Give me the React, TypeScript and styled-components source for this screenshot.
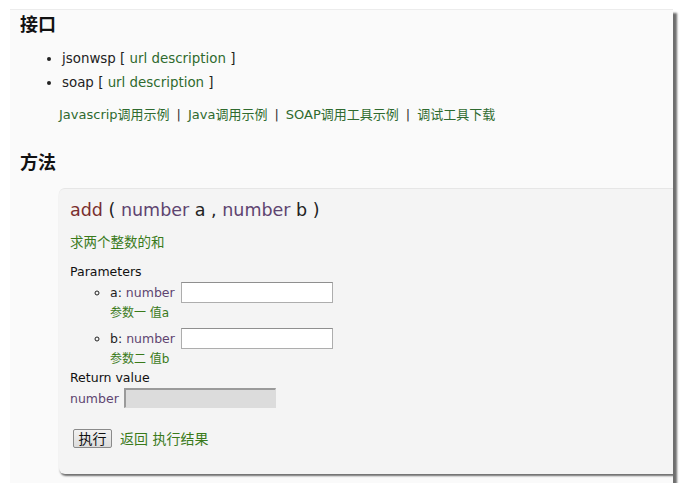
import React from "react";
import styled, { createGlobalStyle } from "styled-components";

const Global = createGlobalStyle`
  html, body { margin: 0; padding: 0; background: #ffffff; }
  body { font-family: "DejaVu Sans", Verdana, "Noto Sans CJK SC", sans-serif; color: #222; }
`;

const Frame = styled.div`
  margin: 9px 0 0 10px;
  width: 663px;
  height: 474px;
  box-sizing: border-box;
  padding-left: 10px;
  overflow: hidden;
  background: #fafafa;
  border-top: 1px solid #ececec;
  box-shadow: 4px 4px 2px #6e6e6e;
`;

const Heading = styled.h2<{ $top: number }>`
  margin: ${(p) => p.$top}px 0 0 0;
  font-family: "Liberation Serif", "Noto Sans CJK SC", serif;
  font-size: 18px;
  font-weight: bold;
  line-height: 24px;
  color: #111;
`;

const EndpointList = styled.ul`
  margin: 10px 0 0 0;
  padding-left: 42px;
  list-style: disc;
  font-size: 13.4px;
`;

const EndpointItem = styled.li`
  line-height: 24px;
`;

const Link = styled.a`
  color: #2f6a2f;
  text-decoration: none;
`;

const ExampleLinks = styled.div`
  margin: 10px 0 0 39px;
  font-size: 13px;
  line-height: 20px;
  color: #333;
`;

const Sep = styled.span`
  margin: 0 7px;
`;

const MethodBox = styled.div`
  margin: 13px 0 0 39px;
  width: 700px;
  box-sizing: border-box;
  padding: 9px 0 26px 11px;
  background: #f4f4f4;
  border-top: 1px solid #e6e6e6;
  border-radius: 6px;
  box-shadow: 1px 2px 2px #6e6e6e;
`;

const Signature = styled.div`
  font-size: 17.5px;
  line-height: 24px;
  color: #222;
`;

const FnName = styled.span`
  color: #7a2e2e;
`;

const TypeName = styled.span`
  color: #5e4470;
`;

const Desc = styled.div<{ $top: number }>`
  margin-top: ${(p) => p.$top}px;
  font-size: 13.5px;
  line-height: 18px;
  color: #3a7a1a;
`;

const Label = styled.div<{ $top: number }>`
  margin-top: ${(p) => p.$top}px;
  font-size: 12.5px;
  line-height: 18px;
  color: #111;
`;

const ParamList = styled.ul`
  margin: 0;
  padding-left: 40px;
  list-style: circle;
  font-size: 12.5px;
`;

const ParamItem = styled.li<{ $top: number }>`
  margin-top: ${(p) => p.$top}px;
`;

const ParamRow = styled.div`
  display: flex;
  align-items: center;
  gap: 6px;
  height: 22px;
`;

const TextInput = styled.input`
  width: 152px;
  height: 21px;
  box-sizing: border-box;
  border: 1px solid #adadad;
  border-top-color: #8f8f8f;
  background: #fff;
  margin: 0;
  padding: 1px 3px;
`;

const ResultInput = styled(TextInput)`
  height: 20px;
  background: #dcdcdc;
  border: 1px solid #dcdcdc;
  border-top: 2px solid #9a9a9a;
  border-left: 2px solid #9a9a9a;
`;

const ParamDesc = styled.div`
  font-size: 12px;
  line-height: 18px;
  margin-top: 1px;
  color: #3a7a1a;
`;

const ReturnRow = styled.div`
  display: flex;
  align-items: center;
  gap: 5px;
  margin-top: 1px;
  height: 20px;
  font-size: 12.5px;
`;

const ActionRow = styled.div`
  display: flex;
  align-items: center;
  gap: 8px;
  margin-top: 20px;
  padding-left: 3px;
`;

const RunButton = styled.button`
  width: 39px;
  height: 19px;
  padding: 0;
  font-family: "Noto Sans CJK SC", sans-serif;
  font-size: 14px;
  line-height: 17px;
  color: #111;
  border: 1px solid #8a8a8a;
  border-radius: 2px;
  background: linear-gradient(#f2f2f2, #dcdcdc);
`;

const Result = styled.span`
  font-size: 14px;
  color: #3a7a1a;
`;

export default function App() {
  return (
    <>
      <Global />
      <Frame>
        <Heading $top={3}>接口</Heading>
        <EndpointList>
          <EndpointItem>
            jsonwsp [ <Link href="#">url</Link> <Link href="#">description</Link> ]
          </EndpointItem>
          <EndpointItem>
            soap [ <Link href="#">url</Link> <Link href="#">description</Link> ]
          </EndpointItem>
        </EndpointList>
        <ExampleLinks>
          <Link href="#">Javascrip调用示例</Link>
          <Sep>|</Sep>
          <Link href="#">Java调用示例</Link>
          <Sep>|</Sep>
          <Link href="#">SOAP调用工具示例</Link>
          <Sep>|</Sep>
          <Link href="#">调试工具下载</Link>
        </ExampleLinks>
        <Heading $top={26}>方法</Heading>
        <MethodBox>
          <Signature>
            <FnName>add</FnName> ( <TypeName>number</TypeName> a , <TypeName>number</TypeName> b )
          </Signature>
          <Desc $top={11}>求两个整数的和</Desc>
          <Label $top={12}>Parameters</Label>
          <ParamList>
            <ParamItem $top={0}>
              <ParamRow>
                <span>
                  a: <TypeName>number</TypeName>
                </span>
                <TextInput type="text" />
              </ParamRow>
              <ParamDesc>参数一 值a</ParamDesc>
            </ParamItem>
            <ParamItem $top={5}>
              <ParamRow>
                <span>
                  b: <TypeName>number</TypeName>
                </span>
                <TextInput type="text" />
              </ParamRow>
              <ParamDesc>参数二 值b</ParamDesc>
            </ParamItem>
          </ParamList>
          <Label $top={1}>Return value</Label>
          <ReturnRow>
            <TypeName>number</TypeName>
            <ResultInput type="text" readOnly disabled />
          </ReturnRow>
          <ActionRow>
            <RunButton>执行</RunButton>
            <Result>返回 执行结果</Result>
          </ActionRow>
        </MethodBox>
      </Frame>
    </>
  );
}
